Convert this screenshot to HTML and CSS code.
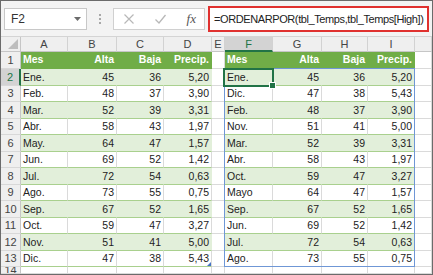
FILE: index.html
```html
<!DOCTYPE html>
<html lang="es">
<head>
  <meta charset="UTF-8">
  <title>ORDENARPOR</title>
  <link rel="stylesheet" href="styles.css">
</head>
<body>
  <div class="window">
    <div class="toolbar">
      <div class="namebox">
        <span>F2</span>
        <svg class="caret" width="7" height="4" viewBox="0 0 7 4"><path d="M0 0h7L3.5 4z" fill="#6b6b6b"/></svg>
      </div>
      <div class="grip"><i></i><i></i><i></i></div>
      <div class="fbuttons">
        <svg width="12" height="12" viewBox="0 0 12 12"><path d="M1.5 1.5l9 9M10.5 1.5l-9 9" stroke="#b8b8b8" stroke-width="1.2" fill="none"/></svg>
        <svg width="13" height="12" viewBox="0 0 13 12"><path d="M1.5 6.5l3.5 3.5 6.5-8" stroke="#b8b8b8" stroke-width="1.3" fill="none"/></svg>
        <span class="fx">fx</span>
      </div>
      <div class="formula">=ORDENARPOR(tbl_Temps,tbl_Temps[High])</div>
    </div>

    <div class="sheet" id="sheet"></div>
  </div>

  <script>
    const cols = ['', 'A', 'B', 'C', 'D', 'E', 'F', 'G', 'H', 'I', ''];
    const left = [
      ['Ene.', 45, 36, '5,20'], ['Feb.', 48, 37, '3,90'], ['Mar.', 52, 39, '3,31'],
      ['Abr.', 58, 43, '1,97'], ['May.', 64, 47, '1,57'], ['Jun.', 69, 52, '1,42'],
      ['Jul.', 72, 54, '0,63'], ['Ago.', 73, 55, '0,75'], ['Sep.', 67, 52, '1,65'],
      ['Oct.', 59, 47, '3,27'], ['Nov.', 51, 41, '5,00'], ['Dic.', 47, 38, '5,43']
    ];
    const right = [
      ['Ene.', 45, 36, '5,20'], ['Dic.', 47, 38, '5,43'], ['Feb.', 48, 37, '3,90'],
      ['Nov.', 51, 41, '5,00'], ['Mar.', 52, 39, '3,31'], ['Abr.', 58, 43, '1,97'],
      ['Oct.', 59, 47, '3,27'], ['Mayo', 64, 47, '1,57'], ['Sep.', 67, 52, '1,65'],
      ['Jun.', 69, 52, '1,42'], ['Jul.', 72, 54, '0,63'], ['Ago.', 73, 55, '0,75']
    ];
    const heads = ['Mes', 'Alta', 'Baja', 'Precip.'];
    const sheet = document.getElementById('sheet');

    function cell(cls, text) {
      const d = document.createElement('div');
      d.className = 'c ' + cls;
      d.textContent = text === undefined ? '' : text;
      sheet.appendChild(d);
    }

    // encabezados de columna
    cols.forEach((c, i) => {
      if (i === 0) cell('corner');
      else cell('ch' + (c === 'F' ? ' sel' : ''), c);
    });

    // filas
    for (let r = 1; r <= 14; r++) {
      cell('rh' + (r === 2 ? ' sel' : ''), r);
      const row = r === 1 ? heads : (left[r - 2] || null);
      const rrow = r === 1 ? heads : (right[r - 2] || null);
      const kind = r === 1 ? 'hd' : (r <= 13 ? (r % 2 === 0 ? 'tb band' : 'tb') : '');
      for (let i = 0; i < 4; i++) {
        cell(kind + (i === 0 ? ' txt' : ' num') + (i === 3 && r === 13 ? ' grip-end' : ''), row ? row[i] : '');
      }
      cell('');
      for (let i = 0; i < 4; i++) {
        cell(kind + (i === 0 ? ' txt' : ' num'), rrow ? rrow[i] : '');
      }
      cell('');
    }

    const spill = document.createElement('div');
    spill.className = 'spill';
    sheet.appendChild(spill);
    const selBox = document.createElement('div');
    selBox.className = 'selbox';
    sheet.appendChild(selBox);
  </script>
</body>
</html>
```

FILE: styles.css
```css
body {
  margin: 0;
  font-family: "Liberation Sans", Arial, sans-serif;
  background: #fff;
}

.window {
  width: 433px;
  height: 275px;
  box-sizing: border-box;
  border: 1px solid #6b6b6b;
  overflow: hidden;
  background: #fff;
}

.toolbar {
  height: 35px;
  background: #f3f3f3;
  border-bottom: 1px solid #d4d4d4;
  display: flex;
  align-items: center;
}

.namebox {
  margin-left: 3px;
  width: 83px;
  height: 22px;
  box-sizing: border-box;
  background: #fff;
  border: 1px solid #c8c8c8;
  display: flex;
  align-items: center;
  justify-content: space-between;
  padding: 0 5px 0 6px;
  font-size: 12px;
  color: #333;
}

.grip {
  width: 26px;
  display: flex;
  flex-direction: column;
  align-items: center;
  gap: 2px;
}

.grip i {
  width: 2px;
  height: 2px;
  background: #a8a8a8;
}

.fbuttons {
  width: 92px;
  height: 22px;
  box-sizing: border-box;
  background: #fff;
  border: 1px solid #d0d0d0;
  display: flex;
  align-items: center;
  justify-content: space-between;
  padding: 0 8px 0 9px;
}

.fx {
  font-family: "Liberation Serif", serif;
  font-style: italic;
  font-size: 13px;
  color: #555;
}

.formula {
  margin-left: 3px;
  width: 221px;
  height: 26px;
  box-sizing: border-box;
  background: #fff;
  border: 2px solid #e0312f;
  display: flex;
  align-items: center;
  padding-left: 4px;
  font-size: 11px;
  letter-spacing: -0.4px;
  color: #222;
  white-space: nowrap;
}

.sheet {
  position: relative;
  display: grid;
  grid-template-columns: 20px 47px 49px 47px 48px 13px 48px 49px 46px 47px 1fr;
  grid-template-rows: 15px 17px repeat(12, 16.5px) 1fr;
  height: 237px;
  font-size: 10.5px;
  color: #222;
}

.c {
  box-sizing: border-box;
  border-right: 1px solid #dadada;
  border-bottom: 1px solid #dadada;
  display: flex;
  align-items: center;
  padding: 0 2px;
  white-space: nowrap;
  overflow: hidden;
}

.corner {
  background: #efefef;
  border-right: 1px solid #c6c6c6;
  border-bottom: 1px solid #c6c6c6;
  position: relative;
}

.corner::after {
  content: "";
  position: absolute;
  right: 2px;
  bottom: 2px;
  border-left: 10px solid transparent;
  border-bottom: 10px solid #bdbdbd;
}

.ch {
  background: #efefef;
  justify-content: center;
  color: #444;
  font-size: 11px;
  border-right: 1px solid #d2d2d2;
  border-bottom: 1px solid #c6c6c6;
}

.ch.sel {
  background: #d3d3d3;
  border-bottom: 2px solid #217346;
  color: #217346;
}

.rh {
  background: #efefef;
  justify-content: center;
  color: #444;
  font-size: 11px;
  border-right: 1px solid #c6c6c6;
  border-bottom: 1px solid #d8d8d8;
}

.rh.sel {
  background: #d3d3d3;
  border-right: 2px solid #217346;
  color: #217346;
}

.num {
  justify-content: flex-end;
}

.hd {
  background: #70ad47;
  color: #fff;
  font-weight: bold;
  border-right-color: #70ad47;
  border-bottom-color: #70ad47;
  align-items: flex-start;
  padding-top: 1px;
}

.tb {
  border-bottom-color: #a9d08e;
}

.band {
  background: #e2efda;
  border-right-color: #e2efda;
}

.grip-end {
  position: relative;
}

.grip-end::after {
  content: "";
  position: absolute;
  right: 0;
  bottom: 0;
  border-left: 4px solid transparent;
  border-bottom: 4px solid #4472c4;
}

.spill {
  position: absolute;
  left: 223px;
  top: 31px;
  width: 191px;
  height: 199px;
  box-sizing: border-box;
  border: 1px solid #6f97d6;
  pointer-events: none;
}

.selbox {
  position: absolute;
  left: 222px;
  top: 30.5px;
  width: 51px;
  height: 19px;
  box-sizing: border-box;
  border: 2px solid #217346;
}

.selbox::after {
  content: "";
  position: absolute;
  right: -4px;
  bottom: -4px;
  width: 5px;
  height: 5px;
  background: #217346;
  border: 1px solid #fff;
}
```
